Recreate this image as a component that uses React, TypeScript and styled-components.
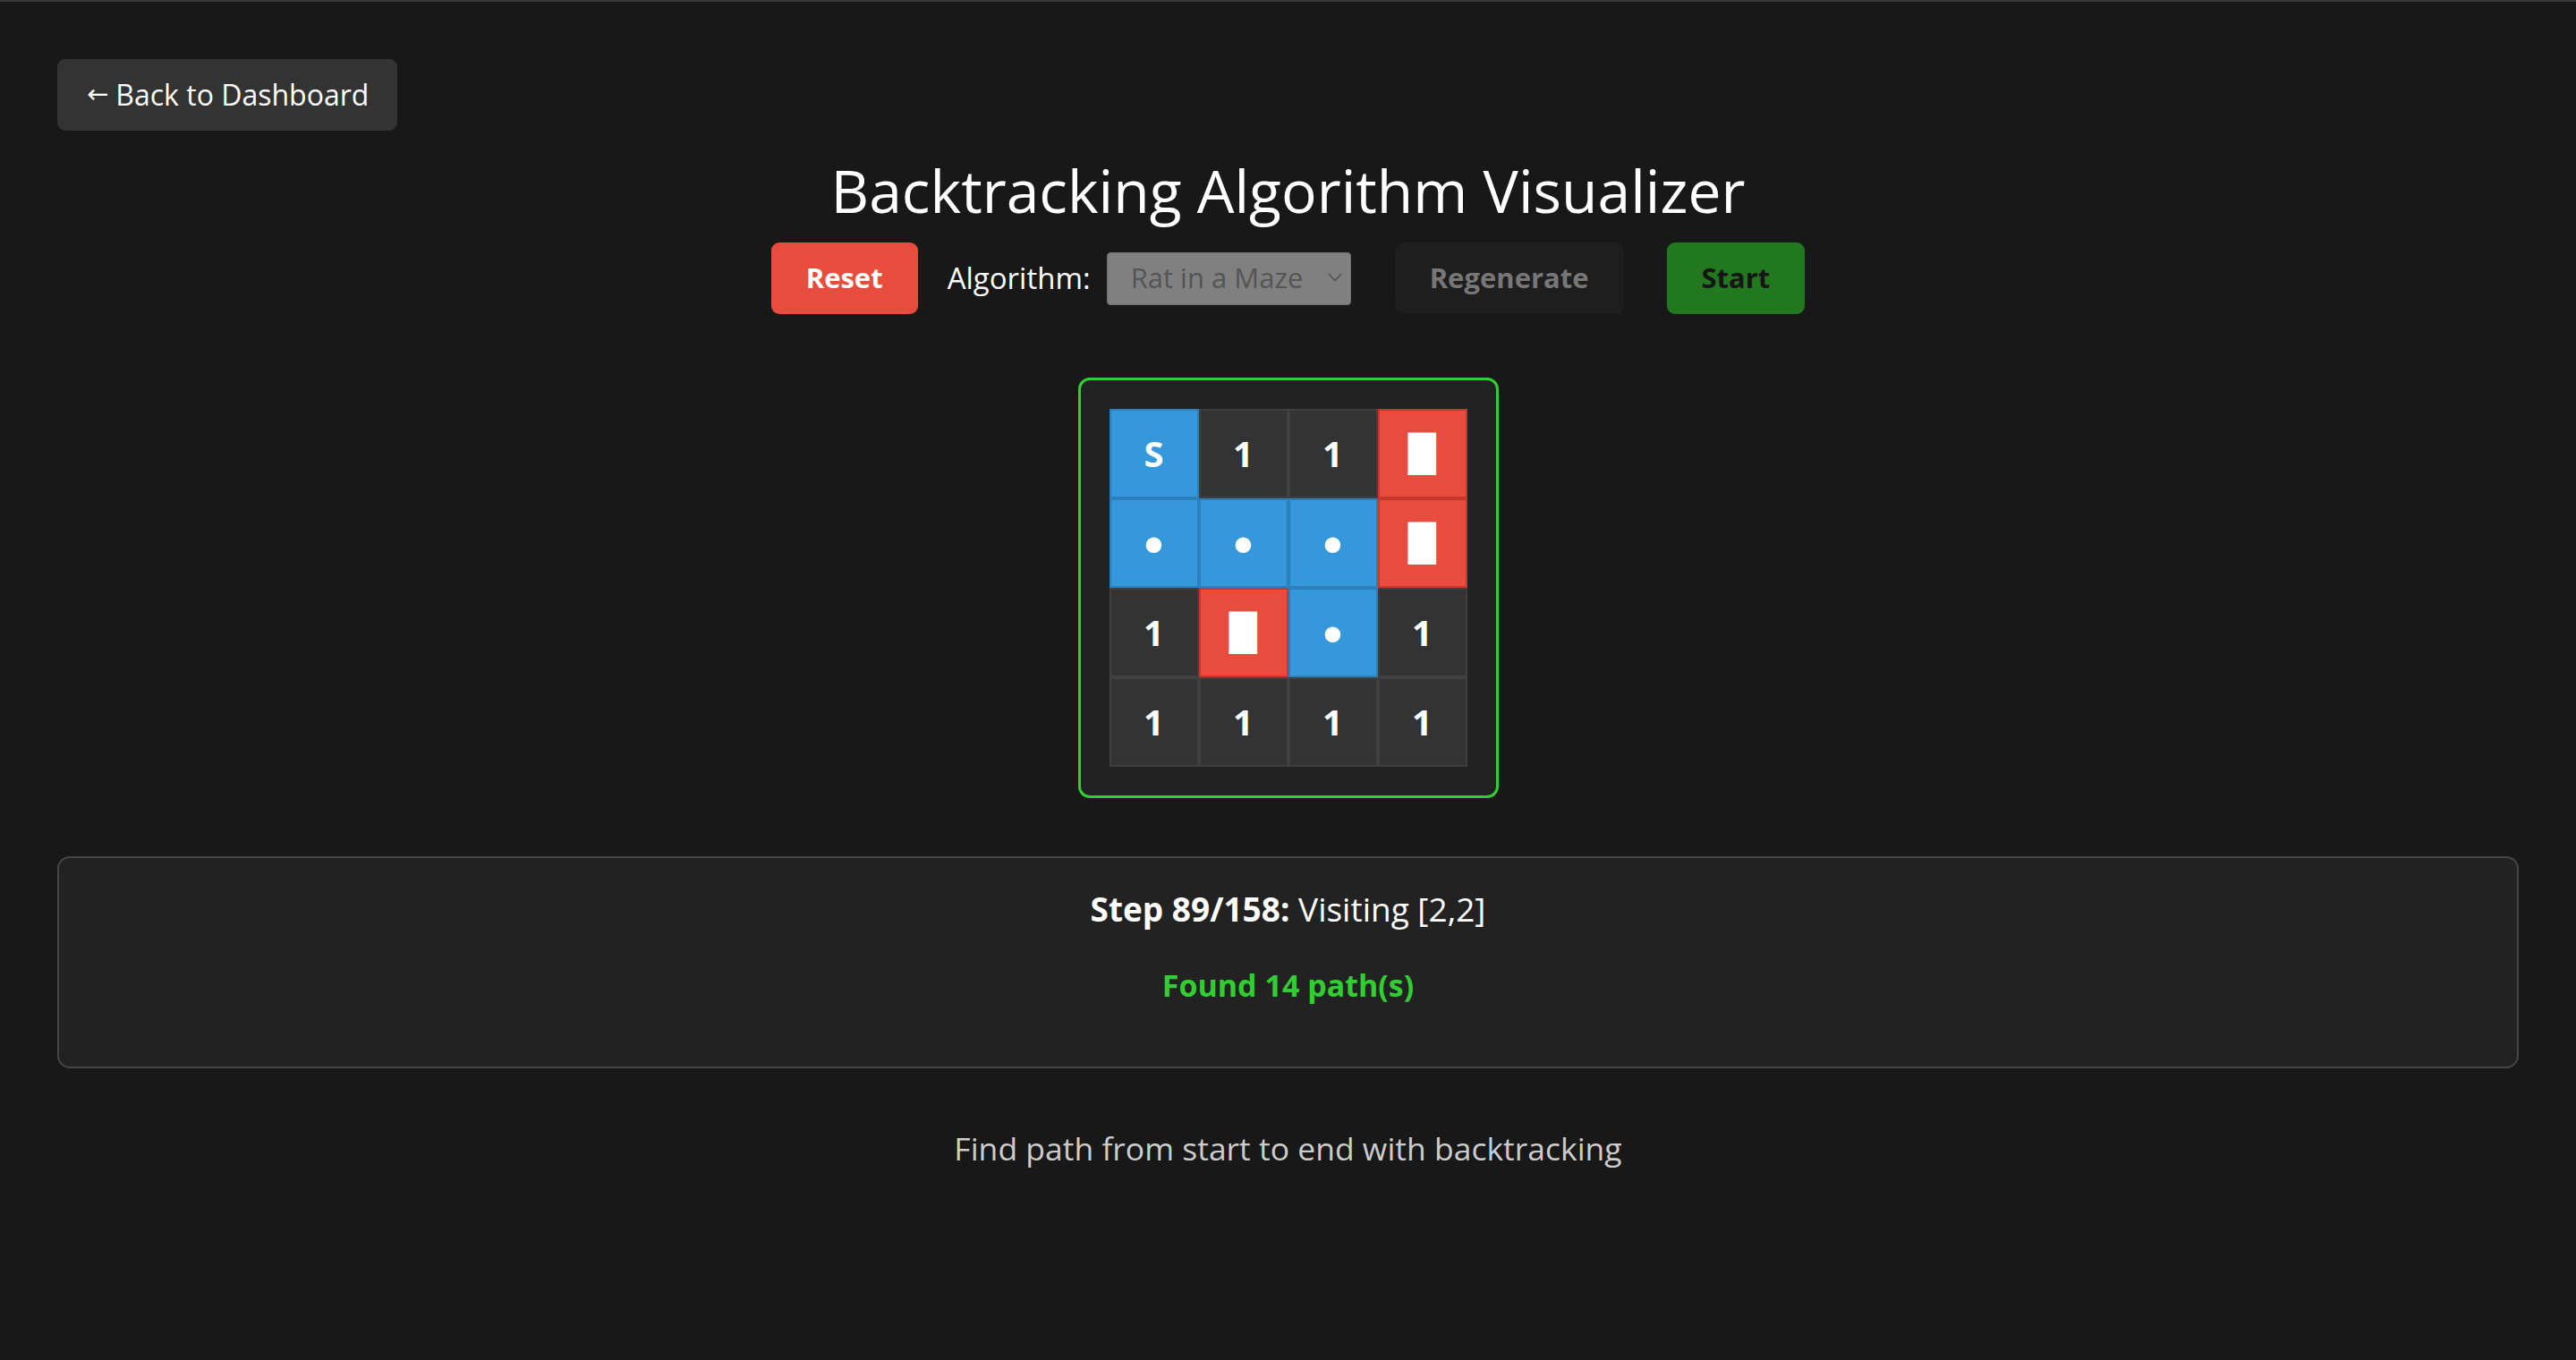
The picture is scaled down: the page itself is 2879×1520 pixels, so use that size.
import React from "react";
import styled, { createGlobalStyle } from "styled-components";

const GlobalStyle = createGlobalStyle`
  html, body {
    margin: 0;
    padding: 0;
    background: #181818;
  }
  body {
    font-family: "Open Sans", "Noto Sans", sans-serif;
    color: #ffffff;
  }
  * { box-sizing: border-box; }
`;

const Page = styled.div`
  min-height: 1520px;
  border-top: 2px solid #363636;
  padding: 64px 64px 64px;
  display: flex;
  flex-direction: column;
  align-items: center;
`;

const BackButton = styled.button`
  align-self: flex-start;
  height: 80px;
  padding: 0 32px 2px 33px;
  display: inline-flex;
  align-items: center;
  border: none;
  border-radius: 9px;
  background: #333333;
  color: #ffffff;
  font-family: inherit;
  font-size: 32px;
  cursor: pointer;
`;

const Arrow = styled.span`
  font-family: "DejaVu Sans", sans-serif;
  font-size: 29px;
  margin-right: 8px;
`;

const Title = styled.h1`
  margin: 26px 0 0;
  font-size: 66px;
  line-height: 80px;
  font-weight: 500;
  color: #ffffff;
  text-align: center;
`;

const Controls = styled.div`
  margin-top: 19px;
  display: flex;
  align-items: center;
  gap: 18px;
`;

const Button = styled.button<{ $bg: string; $fg: string }>`
  height: 80px;
  margin: 0 15px;
  padding: 0 39px 2px;
  border: none;
  border-radius: 9px;
  background: ${(p) => p.$bg};
  color: ${(p) => p.$fg};
  font-family: inherit;
  font-size: 31px;
  font-weight: 700;
`;

const Label = styled.span`
  font-size: 33px;
  color: #ffffff;
  padding-bottom: 2px;
`;

const SelectBox = styled.div`
  width: 273px;
  height: 59px;
  margin-right: 16px;
  padding: 0 9px 2px 26px;
  display: flex;
  align-items: center;
  justify-content: space-between;
  background: #808080;
  border: 1px solid #6e6e6e;
  border-radius: 4px;
  color: #555555;
  font-size: 31px;
`;

const Board = styled.div`
  margin-top: 71px;
  padding: 32px;
  border: 3px solid #32cd32;
  border-radius: 13px;
  background: #222222;
`;

const Grid = styled.div`
  display: grid;
  grid-template-columns: repeat(4, 100px);
  grid-template-rows: repeat(4, 100px);
`;

type Kind = "path" | "open" | "wall";

const cellColors: Record<Kind, { bg: string; border: string }> = {
  path: { bg: "#3498db", border: "#2b80bb" },
  open: { bg: "#333333", border: "#404040" },
  wall: { bg: "#e74c3c", border: "#c4392c" },
};

const Cell = styled.div<{ $kind: Kind }>`
  display: flex;
  align-items: center;
  justify-content: center;
  background: ${(p) => cellColors[p.$kind].bg};
  border: 2px solid ${(p) => cellColors[p.$kind].border};
  color: #ffffff;
  font-size: 40px;
  font-weight: 700;
  line-height: 1;
`;

const Glyph = styled.span<{ $size: number; $drop?: number }>`
  font-family: "DejaVu Sans", sans-serif;
  font-weight: 400;
  font-size: ${(p) => p.$size}px;
  line-height: 1;
  padding-top: ${(p) => p.$drop ?? 0}px;
`;

const StatusBox = styled.div`
  align-self: stretch;
  margin-top: 65px;
  padding: 29px 24px 66px;
  border: 2px solid #454545;
  border-radius: 14px;
  background: #222222;
  display: flex;
  flex-direction: column;
  align-items: center;
`;

const StepLine = styled.div`
  font-size: 37px;
  line-height: 56px;
  color: #ffffff;
`;

const Found = styled.div`
  margin-top: 32px;
  font-size: 34px;
  line-height: 50px;
  font-weight: 700;
  color: #32cd32;
`;

const Footer = styled.p`
  margin: 64px 0 0;
  font-size: 35.5px;
  line-height: 50px;
  color: #cccccc;
  text-align: center;
`;

type CellData = { kind: Kind; text: string };

const grid: CellData[][] = [
  [
    { kind: "path", text: "S" },
    { kind: "open", text: "1" },
    { kind: "open", text: "1" },
    { kind: "wall", text: "█" },
  ],
  [
    { kind: "path", text: "•" },
    { kind: "path", text: "•" },
    { kind: "path", text: "•" },
    { kind: "wall", text: "█" },
  ],
  [
    { kind: "open", text: "1" },
    { kind: "wall", text: "█" },
    { kind: "path", text: "•" },
    { kind: "open", text: "1" },
  ],
  [
    { kind: "open", text: "1" },
    { kind: "open", text: "1" },
    { kind: "open", text: "1" },
    { kind: "open", text: "1" },
  ],
];

function renderText(t: string) {
  if (t === "█") return <Glyph $size={40}>█</Glyph>;
  if (t === "•") return <Glyph $size={60} $drop={7}>•</Glyph>;
  return t;
}

export default function App() {
  return (
    <>
      <GlobalStyle />
      <Page>
        <BackButton>
          <Arrow>←</Arrow>Back to Dashboard
        </BackButton>
        <Title>Backtracking Algorithm Visualizer</Title>
        <Controls>
          <Button $bg="#e74c3c" $fg="#ffffff">Reset</Button>
          <Label>Algorithm:</Label>
          <SelectBox>
            <span>Rat in a Maze</span>
            <svg width="16" height="10" viewBox="0 0 16 10">
              <polyline
                points="1,1 8,8.5 15,1"
                fill="none"
                stroke="#555555"
                strokeWidth="1.6"
              />
            </svg>
          </SelectBox>
          <Button $bg="#1e1e1e" $fg="#777777">Regenerate</Button>
          <Button $bg="#22781f" $fg="#161616">Start</Button>
        </Controls>
        <Board>
          <Grid>
            {grid.flatMap((row, r) =>
              row.map((c, i) => (
                <Cell key={`${r}-${i}`} $kind={c.kind}>
                  {renderText(c.text)}
                </Cell>
              ))
            )}
          </Grid>
        </Board>
        <StatusBox>
          <StepLine>
            <strong>Step 89/158:</strong> Visiting [2,2]
          </StepLine>
          <Found>Found 14 path(s)</Found>
        </StatusBox>
        <Footer>Find path from start to end with backtracking</Footer>
      </Page>
    </>
  );
}
